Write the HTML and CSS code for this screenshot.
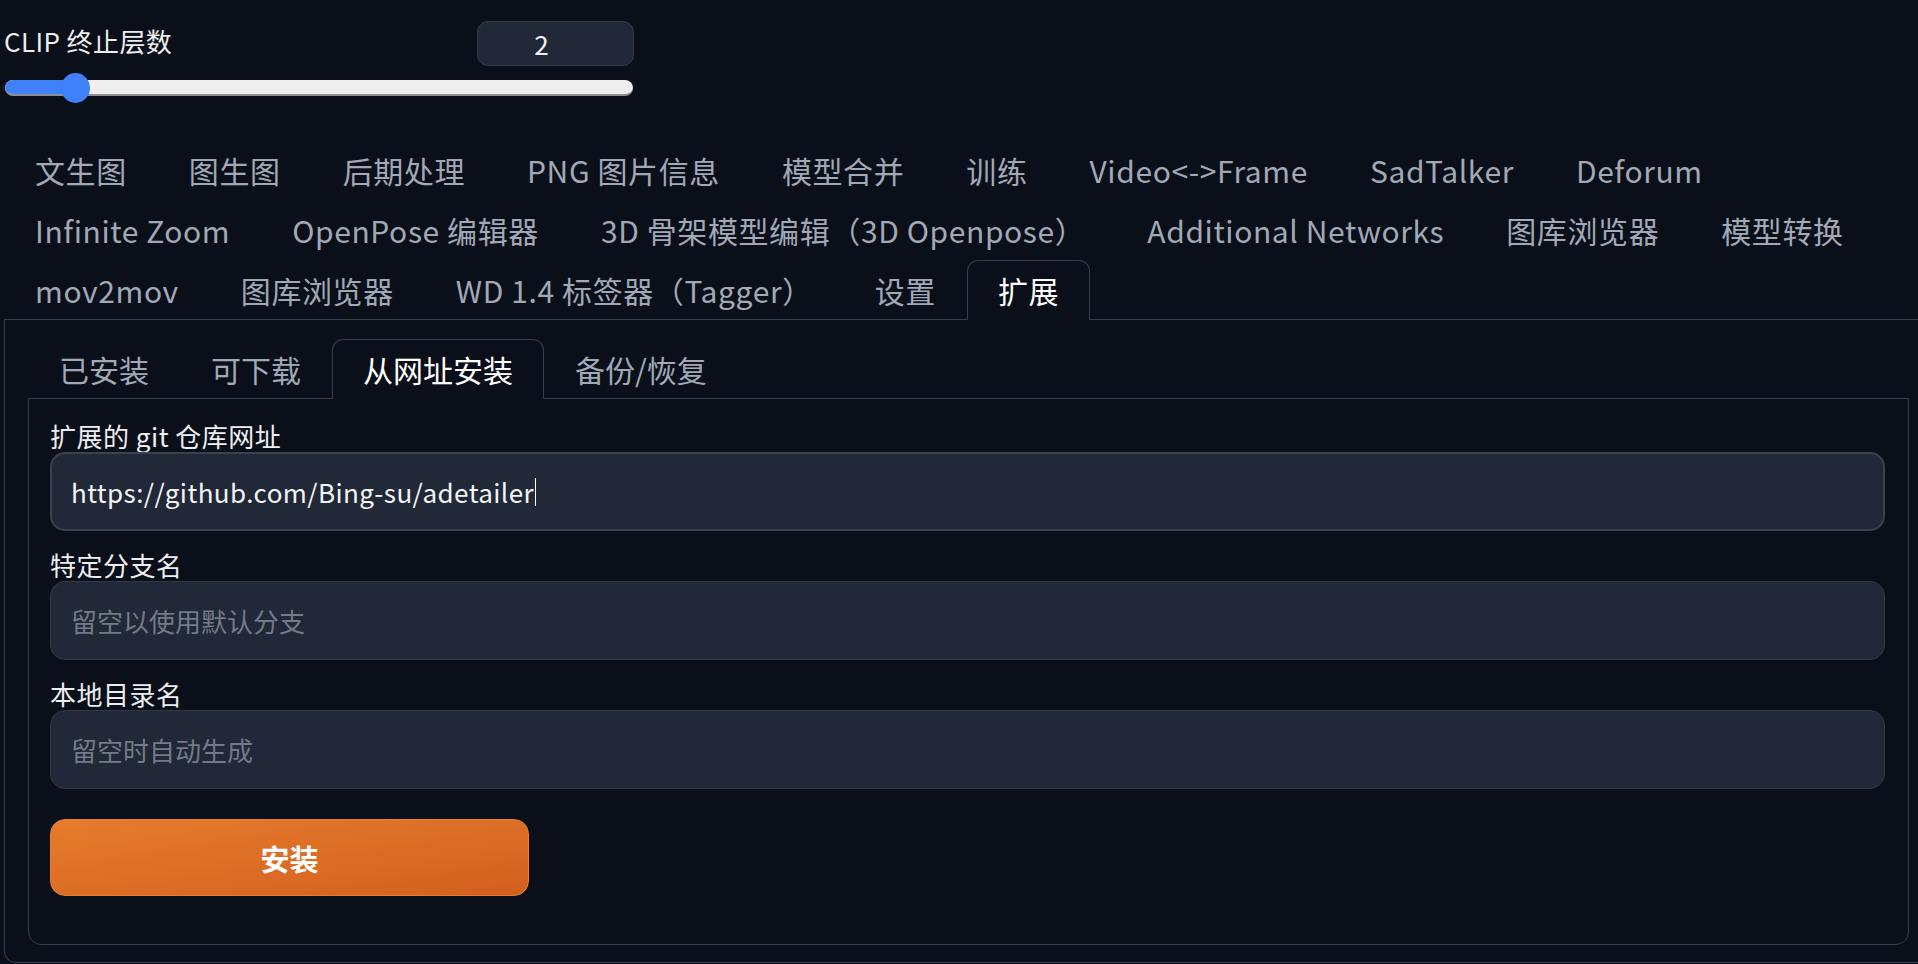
FILE: index.html
```html
<!DOCTYPE html>
<html lang="zh-CN">
<head>
<meta charset="utf-8">
<title>扩展</title>
<link rel="stylesheet" href="styles.css">
</head>
<body>
<div class="page">
  <div class="clip">
    <div class="clip-head">
      <span class="clip-label">CLIP 终止层数</span>
      <div class="num-box">2</div>
    </div>
    <div class="slider">
      <div class="track"><div class="fill" style="width:70px"></div></div>
      <div class="thumb" style="left:56px"></div>
    </div>
  </div>

  <div class="tabnav">
    <button class="tab">文生图</button>
    <button class="tab">图生图</button>
    <button class="tab">后期处理</button>
    <button class="tab">PNG 图片信息</button>
    <button class="tab">模型合并</button>
    <button class="tab">训练</button>
    <button class="tab">Video&lt;-&gt;Frame</button>
    <button class="tab">SadTalker</button>
    <button class="tab">Deforum</button>
    <button class="tab">Infinite Zoom</button>
    <button class="tab">OpenPose 编辑器</button>
    <button class="tab">3D 骨架模型编辑（3D Openpose）</button>
    <button class="tab">Additional Networks</button>
    <button class="tab">图库浏览器</button>
    <button class="tab">模型转换</button>
    <button class="tab">mov2mov</button>
    <button class="tab">图库浏览器</button>
    <button class="tab">WD 1.4 标签器（Tagger）</button>
    <button class="tab">设置</button>
    <button class="tab selected">扩展</button>
  </div>

  <div class="panel">
    <div class="tabnav sub">
      <button class="tab">已安装</button>
      <button class="tab">可下载</button>
      <button class="tab selected">从网址安装</button>
      <button class="tab">备份/恢复</button>
    </div>
    <div class="inner">
      <div class="field">
        <label class="field-label">扩展的 git 仓库网址</label>
        <div class="textbox focused">https://github.com/Bing-su/adetailer<span class="caret"></span></div>
      </div>
      <div class="field">
        <label class="field-label">特定分支名</label>
        <div class="textbox placeholder">留空以使用默认分支</div>
      </div>
      <div class="field">
        <label class="field-label">本地目录名</label>
        <div class="textbox placeholder">留空时自动生成</div>
      </div>
      <button class="install">安装</button>
    </div>
  </div>
</div>
</body>
</html>
```

FILE: styles.css
```css
* { box-sizing: border-box; }

html, body {
  margin: 0;
  padding: 0;
  background: #0b0f19;
  overflow: hidden;
}

body {
  font-family: "Noto Sans CJK SC", "Noto Sans", sans-serif;
  color: #e8eaed;
}

.page {
  padding-left: 4px;
  height: 964px;
}

/* CLIP slider block */
.clip {
  width: 630px;
  padding-top: 21px;
}

.clip-head {
  display: flex;
  justify-content: space-between;
  align-items: center;
  height: 45px;
}

.clip-label {
  font-size: 26px;
  line-height: 34px;
  letter-spacing: 0.4px;
  color: #eceef1;
  margin-top: -6px;
}

.num-box {
  width: 157px;
  height: 45px;
  background: #212837;
  border: 1px solid #343b4a;
  border-radius: 11px;
  color: #f3f4f6;
  font-size: 26px;
  display: flex;
  align-items: center;
  justify-content: center;
  padding-right: 28px;
}

.slider {
  position: relative;
  height: 30px;
  margin-top: 7px;
  margin-left: 1px;
  display: flex;
  align-items: center;
}

.track {
  width: 628px;
  height: 16px;
  border-radius: 8px;
  background: #efefef;
  border-bottom: 2px solid #8e8e8e;
  overflow: hidden;
}

.fill {
  height: 100%;
  background: #3f80fb;
}

.thumb {
  position: absolute;
  top: 0;
  width: 29px;
  height: 30px;
  border-radius: 50%;
  background: #3f80fb;
}

/* tabs */
.tabnav {
  display: flex;
  flex-wrap: wrap;
  margin-top: 37px;
  margin-bottom: -1px;
  position: relative;
  z-index: 1;
}

.tab {
  height: 60px;
  padding: 0 30px 2px;
  border: 1px solid transparent;
  border-bottom: none;
  border-radius: 11px 11px 0 0;
  background: transparent;
  color: #a1a9b7;
  font-family: inherit;
  font-size: 30px;
  letter-spacing: 0.6px;
  line-height: 1;
  white-space: nowrap;
  cursor: pointer;
}

.tab.selected {
  color: #ffffff;
  border-color: #363d4c;
  background: #0b0f19;
}

.panel {
  border: 1px solid #363d4c;
  border-right: none;
  border-radius: 0 0 0 12px;
  padding: 19px 9px 15px 23px;
  height: 644px;
}

.tabnav.sub {
  margin-top: 0;
}

.tabnav.sub .tab {
  letter-spacing: 0;
}

.inner {
  border: 1px solid #363d4c;
  border-radius: 0 0 13px 13px;
  padding: 20px 23px 48px 21px;
}

.field {
  display: flex;
  flex-direction: column;
  margin-bottom: 17px;
}

.field-label {
  font-size: 26px;
  line-height: 33px;
  letter-spacing: 0.5px;
  color: #eceef1;
}

.textbox {
  height: 79px;
  background: #212837;
  border: 1px solid #313848;
  border-radius: 15px;
  padding: 0 20px;
  display: flex;
  align-items: center;
  font-size: 26px;
  color: #f3f4f6;
}

.textbox.focused {
  border: 2px solid #3a4252;
  padding-left: 19px;
  letter-spacing: 0.42px;
}

.textbox.placeholder {
  color: #737a88;
}

.caret {
  display: inline-block;
  width: 0;
  height: 28px;
  border-left: 1.5px solid #ffffff;
  margin-left: 1px;
}

.install {
  margin-top: 13px;
  width: 479px;
  height: 77px;
  border: 1px solid #e57f34;
  border-radius: 15px;
  background: linear-gradient(to bottom right, #e67c2c, #d35f1f);
  color: #ffffff;
  font-family: inherit;
  font-size: 29px;
  font-weight: 700;
  cursor: pointer;
}
```
